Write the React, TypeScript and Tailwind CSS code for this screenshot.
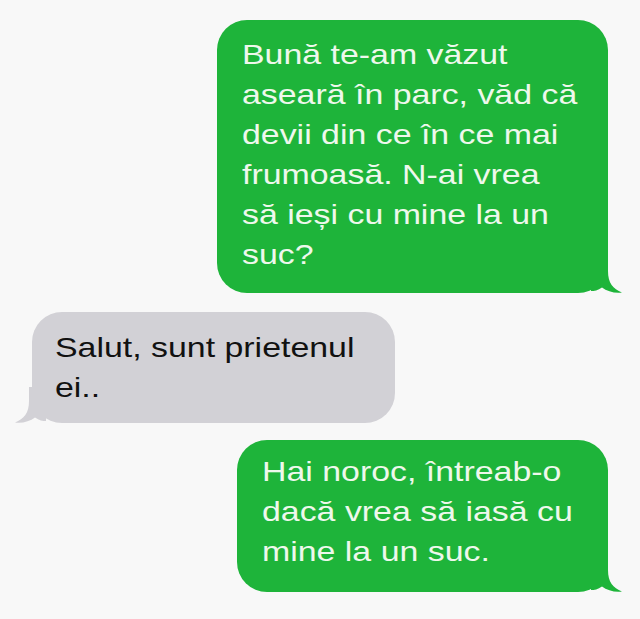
import React from 'react';

type Side = 'me' | 'them';

interface BubbleProps {
  side: Side;
  lines: string[];
  className: string;
}

const Tail: React.FC<{ side: Side }> = ({ side }) => {
  if (side === 'me') {
    return (
      <svg
        className="absolute right-[-14px] bottom-0 w-[31px] h-[36px]"
        viewBox="0 0 31 36"
        fill="#1eb43a"
      >
        <path d="M0,0 H17 V14 C17,26 22,32 31,35.5 C24,36.5 16,34.5 11,30.5 C7,33.5 3,34 0,34 Z" />
      </svg>
    );
  }
  return (
    <svg
      className="absolute left-[-17px] bottom-0 w-[31px] h-[36px]"
      viewBox="0 0 31 36"
      fill="#d2d1d6"
    >
      <path d="M31,0 H14 V14 C14,26 9,32 0,35.5 C7,36.5 15,34.5 20,30.5 C24,33.5 28,34 31,34 Z" />
    </svg>
  );
};

const Bubble: React.FC<BubbleProps> = ({ side, lines, className }) => {
  const me = side === 'me';
  return (
    <div
      className={`relative rounded-[30px] text-[28px] leading-[40px] ${
        me ? 'bg-[#1eb43a] text-[#eef8ec] self-end' : 'bg-[#d2d1d6] text-[#111111] self-start'
      } ${className}`}
    >
      {lines.map((l, i) => (
        <div key={i} className="whitespace-nowrap origin-left scale-x-[1.21]">
          {l}
        </div>
      ))}
      <Tail side={side} />
    </div>
  );
};

export default function App() {
  return (
    <div
      className="w-[640px] h-[619px] bg-[#f8f8f8] flex flex-col pt-[20px] overflow-hidden"
      style={{ fontFamily: '"Liberation Sans", Arial, sans-serif' }}
    >
      <Bubble
        side="me"
        className="w-[391px] mr-[32px] pl-[25px] pt-[15px] pb-[18px]"
        lines={[
          'Bună te-am văzut',
          'aseară în parc, văd că',
          'devii din ce în ce mai',
          'frumoasă. N-ai vrea',
          'să ieși cu mine la un',
          'suc?',
        ]}
      />
      <Bubble
        side="them"
        className="w-[363px] ml-[32px] mt-[19px] pl-[23px] pt-[16px] pb-[15px]"
        lines={['Salut, sunt prietenul', 'ei..']}
      />
      <Bubble
        side="me"
        className="w-[371px] mr-[32px] mt-[17px] pl-[25px] pt-[12px] pb-[20px]"
        lines={['Hai noroc, întreab-o', 'dacă vrea să iasă cu', 'mine la un suc.']}
      />
    </div>
  );
}
